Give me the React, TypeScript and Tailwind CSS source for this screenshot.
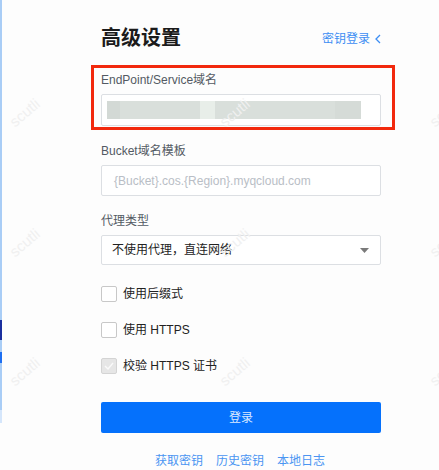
import React from "react";

const font = { fontFamily: '"Liberation Sans", "Noto Sans CJK SC", sans-serif' };

function Watermarks() {
  const rows = [113, 243, 372];
  const cols = [25, 235, 445];
  return (
    <div className="pointer-events-none absolute inset-0">
      {rows.map((y) =>
        cols.map((x) => (
          <span
            key={`${x}-${y}`}
            className="absolute text-[15px] text-[#f0f0f0] -rotate-[40deg] -translate-x-1/2 -translate-y-1/2"
            style={{ left: x, top: y }}
          >
            scutli
          </span>
        ))
      )}
    </div>
  );
}

function Check({ disabled }: { disabled?: boolean }) {
  return disabled ? (
    <span className="flex h-[16px] w-[16px] items-center justify-center rounded-[2px] border border-[#d4d4d4] bg-[#e6e6e6]">
      <svg width="10" height="8" viewBox="0 0 10 8">
        <path d="M1 4l3 3 5-6" fill="none" stroke="#fafafa" strokeWidth="1.4" />
      </svg>
    </span>
  ) : (
    <span className="h-[16px] w-[16px] rounded-[2px] border border-[#c8c8c8] bg-white" />
  );
}

export default function App() {
  return (
    <div className="relative flex h-[470px] w-[439px] overflow-hidden bg-[#fdfdfd] text-[12px]" style={font}>
      <div className="flex w-[2px] flex-col">
        <div className="h-[320px] bg-[#a9cdf6]" />
        <div className="h-[20px] bg-[#1b2f9e]" />
        <div className="h-[12px] bg-[#a9cdf6]" />
        <div className="h-[11px] bg-[#1d6ff2]" />
        <div className="h-[47px] bg-[#a9cdf6]" />
        <div className="h-[13px] bg-[#d5e6fb]" />
      </div>

      <div className="ml-[99px] flex w-[280px] flex-col">
        <div className="mt-[24px] flex h-[28px] items-center justify-between">
          <h1 className="text-[20px] font-bold text-[#1b1b1b]">高级设置</h1>
          <span className="mt-[2px] flex items-center gap-[5px] text-[12px] text-[#3d8ef3]">
            密钥登录
            <svg width="6" height="10" viewBox="0 0 6 10">
              <path d="M5 1L1 5l4 4" fill="none" stroke="#3d8ef3" strokeWidth="1.3" />
            </svg>
          </span>
        </div>

        <div className="mt-[13px] ml-[-10px] mr-[-14px] border-[3px] border-[#f2290d] pt-[3px] pb-[1px] pl-[7px] pr-[11px]">
          <div className="h-[18px] leading-[18px] text-[#535a63]">EndPoint/Service域名</div>
          <div className="mt-[5px] flex h-[32px] items-center rounded-[2px] border border-[#dcdfe3] bg-white px-[5px]">
            <div className="flex h-[18px]">
              <div className="w-[13px] bg-[#d3d9d5]" />
              <div className="w-[80px] bg-[#d9dfdb]" />
              <div className="w-[15px] bg-[#e8eee9]" />
              <div className="w-[120px] bg-[#d9dfdb]" />
              <div className="w-[26px] bg-[#d5dbd7]" />
            </div>
          </div>
        </div>

        <div className="mt-[12px] h-[18px] leading-[18px] text-[#535a63]">Bucket域名模板</div>
        <div className="mt-[5px] flex h-[32px] items-center rounded-[2px] border border-[#dcdfe3] bg-white px-[12px] text-[#b9bec6]">
          {"{Bucket}.cos.{Region}.myqcloud.com"}
        </div>

        <div className="mt-[16px] h-[18px] leading-[18px] text-[#535a63]">代理类型</div>
        <div className="mt-[5px] flex h-[31px] items-center justify-between rounded-[2px] border border-[#dcdfe3] bg-white pl-[10px] pr-[11px] text-[#222]">
          不使用代理，直连网络
          <svg width="9" height="5" viewBox="0 0 9 5">
            <path d="M0 0h9L4.5 5z" fill="#7a7a7a" />
          </svg>
        </div>

        <div className="mt-[19px] flex flex-col gap-[16px] text-[#222]">
          <label className="flex h-[20px] items-center gap-[6px]">
            <Check />
            使用后缀式
          </label>
          <label className="flex h-[20px] items-center gap-[6px]">
            <Check />
            使用 HTTPS
          </label>
          <label className="flex h-[20px] items-center gap-[6px]">
            <Check disabled />
            校验 HTTPS 证书
          </label>
        </div>

        <button className="mt-[26px] h-[32px] rounded-[2px] bg-[#0571fc] text-[12px] text-[#dbe9ff]">登录</button>

        <div className="mt-[19px] flex justify-center gap-[13px] pr-[2px] text-[12px] leading-[18px] text-[#4b95f2]">
          <span>获取密钥</span>
          <span>历史密钥</span>
          <span>本地日志</span>
        </div>
      </div>

      <Watermarks />
    </div>
  );
}
